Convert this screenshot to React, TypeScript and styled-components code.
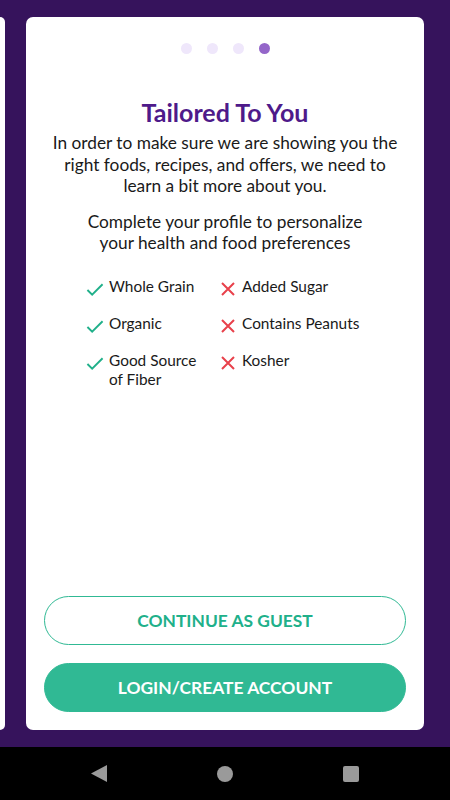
import styled, { createGlobalStyle } from "styled-components";

const GlobalStyle = createGlobalStyle`
  html, body {
    margin: 0;
    padding: 0;
    font-family: Lato, "Open Sans", sans-serif;
  }
`;

const good = ["Whole Grain", "Organic", "Good Source of Fiber"];
const bad = ["Added Sugar", "Contains Peanuts", "Kosher"];

function CheckIcon() {
  return (
    <svg width="19" height="15" viewBox="0 0 19 15">
      <path d="M1.5 8 L6.5 13 L17.5 2" fill="none" stroke="#20b08a" strokeWidth="2" />
    </svg>
  );
}

function CrossIcon() {
  return (
    <svg width="16" height="16" viewBox="0 0 16 16">
      <path d="M2 2 L14 14 M14 2 L2 14" fill="none" stroke="#e8414b" strokeWidth="2" />
    </svg>
  );
}

export default function App() {
  return (
    <Page>
      <GlobalStyle />
      <Stage>
        <Peek />
        <Card>
          <Dots>
            {[0, 1, 2, 3].map((i) => (
              <Dot key={i} $active={i === 3} />
            ))}
          </Dots>
          <Title>Tailored To You</Title>
          <Body>
            In order to make sure we are showing you the
            <br />
            right foods, recipes, and offers, we need to
            <br />
            learn a bit more about you.
          </Body>
          <Body className="second">
            Complete your profile to personalize
            <br />
            your health and food preferences
          </Body>
          <Prefs>
            <PrefColumn>
              {good.map((g) => (
                <PrefItem key={g}>
                  <IconBox>
                    <CheckIcon />
                  </IconBox>
                  <span>{g === "Good Source of Fiber" ? (<>Good Source<br />of Fiber</>) : g}</span>
                </PrefItem>
              ))}
            </PrefColumn>
            <PrefColumn>
              {bad.map((b) => (
                <PrefItem key={b}>
                  <IconBox>
                    <CrossIcon />
                  </IconBox>
                  <span>{b}</span>
                </PrefItem>
              ))}
            </PrefColumn>
          </Prefs>
          <Actions>
            <Button $filled={false}>CONTINUE AS GUEST</Button>
            <Button $filled>LOGIN/CREATE ACCOUNT</Button>
          </Actions>
        </Card>
      </Stage>
      <NavBar>
        <svg width="16" height="17" viewBox="0 0 16 17">
          <path d="M16 0 L16 17 L0 8.5 Z" fill="#9a9a9a" />
        </svg>
        <svg width="16" height="16" viewBox="0 0 16 16">
          <circle cx="8" cy="8" r="8" fill="#9a9a9a" />
        </svg>
        <svg width="16" height="16" viewBox="0 0 16 16">
          <rect x="0" y="0" width="16" height="16" rx="2" fill="#9a9a9a" />
        </svg>
      </NavBar>
    </Page>
  );
}

const Page = styled.div`
  width: 450px;
  height: 800px;
  display: flex;
  flex-direction: column;
  background: #36135c;
`;

const Stage = styled.div`
  height: 747px;
  box-sizing: border-box;
  padding: 17px 0 17px;
  display: flex;
  gap: 21px;
`;

const Peek = styled.div`
  width: 5px;
  background: #fff;
  border-radius: 0 6px 6px 0;
`;

const Card = styled.div`
  width: 398px;
  background: #fff;
  border-radius: 7px;
  box-sizing: border-box;
  padding: 26px 18px 18px;
  display: flex;
  flex-direction: column;
  align-items: center;
`;

const Dots = styled.div`
  display: flex;
  gap: 15px;
`;

const Dot = styled.div<{ $active: boolean }>`
  width: 11px;
  height: 11px;
  border-radius: 50%;
  background: ${(p) => (p.$active ? "#9466c9" : "#efe7fb")};
`;

const Title = styled.h1`
  margin: 43px 0 0;
  font-size: 25px;
  font-weight: 700;
  color: #4e1a8a;
  line-height: 30px;
`;

const Body = styled.p`
  margin: 5px 0 0;
  font-size: 17.3px;
  line-height: 21.5px;
  color: #1a1a1a;
  text-align: center;
  white-space: nowrap;

  &.second {
    margin-top: 14px;
  }
`;

const Prefs = styled.div`
  margin-top: 23px;
  align-self: flex-start;
  margin-left: 42px;
  display: flex;
`;

const PrefColumn = styled.div`
  width: 133px;
  display: flex;
  flex-direction: column;
  gap: 15px;
  &:last-child {
    width: 170px;
  }
`;

const PrefItem = styled.div`
  display: flex;
  gap: 5px;
  font-size: 15.4px;
  line-height: 19px;
  color: #1a1a1a;
`;

const IconBox = styled.div`
  width: 18px;
  height: 19px;
  display: flex;
  align-items: center;
  justify-content: center;
  flex-shrink: 0;
  margin-top: 3px;
`;

const Actions = styled.div`
  margin-top: auto;
  width: 362px;
  display: flex;
  flex-direction: column;
  gap: 18px;
`;

const Button = styled.button<{ $filled: boolean }>`
  height: 49px;
  border-radius: 25px;
  font-family: Lato, "Open Sans", sans-serif;
  font-size: 17.4px;
  font-weight: 700;
  border: 1px solid #30b994;
  background: ${(p) => (p.$filled ? "#30b994" : "#fff")};
  color: ${(p) => (p.$filled ? "#fff" : "#20b08a")};
  cursor: pointer;
`;

const NavBar = styled.div`
  flex: 1;
  background: #000;
  display: flex;
  align-items: center;
  justify-content: center;
  gap: 110px;
`;
